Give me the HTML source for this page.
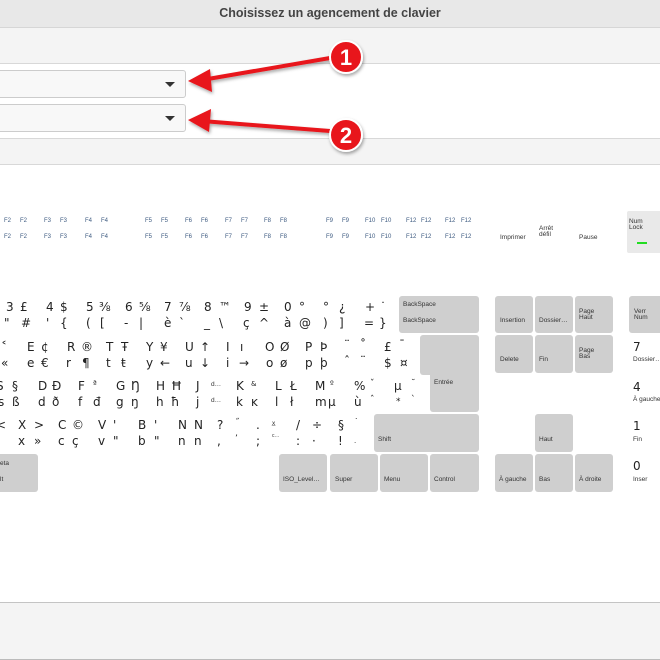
<!DOCTYPE html>
<html><head><meta charset="utf-8"><style>
*{margin:0;padding:0;box-sizing:border-box}
body{width:660px;height:660px;overflow:hidden;position:relative;background:#fff;font-family:"Liberation Sans","DejaVu Sans",sans-serif;color:#222}
.a{position:absolute}
.k{position:absolute;background:#cfcfcf;border-radius:3px}
.kl{position:absolute;font-size:6.5px;color:#333;line-height:7px;white-space:nowrap}
.c{position:absolute;font-size:12px;line-height:12px;color:#222;font-family:"DejaVu Sans","Liberation Sans",sans-serif;white-space:nowrap}
.f{position:absolute;font-size:6px;color:#3d5a80;line-height:6px;white-space:nowrap}
</style></head><body>
<div class="a" style="left:0;top:0;width:660px;height:28px;background:#e8e8e8;border-bottom:1px solid #d6d6d6"></div>
<div class="a" style="left:0;top:6px;width:660px;text-align:center;font-size:12.5px;color:#444;font-weight:bold">Choisissez un agencement de clavier</div>
<div class="a" style="left:0;top:28px;width:660px;height:36px;background:#f4f4f4;border-bottom:1px solid #d8d8d8"></div>
<div class="a" style="left:-5px;top:70px;width:191px;height:28px;background:#f8f8f8;border:1px solid #ccc;border-radius:3px"></div>
<div class="a" style="left:-5px;top:104px;width:191px;height:28px;background:#f8f8f8;border:1px solid #ccc;border-radius:3px"></div>
<div class="a" style="left:165px;top:82px;width:0;height:0;border-left:5px solid transparent;border-right:5px solid transparent;border-top:5px solid #333"></div>
<div class="a" style="left:165px;top:116px;width:0;height:0;border-left:5px solid transparent;border-right:5px solid transparent;border-top:5px solid #333"></div>
<div class="a" style="left:0;top:138px;width:660px;height:27px;background:#f4f4f4;border-top:1px solid #d8d8d8;border-bottom:1px solid #d8d8d8"></div>
<div class="a" style="left:0;top:602px;width:660px;height:58px;background:#f4f4f4;border-top:1px solid #c4c4c4;border-bottom:1px solid #bbb"></div>

<svg class="a" style="left:0;top:0" width="660" height="660">
<defs><filter id="s"><feDropShadow dx="1" dy="2" stdDeviation="1.5" flood-opacity="0.35"/></filter></defs>
<g filter="url(#s)" fill="#e8141a" stroke="#e8141a">
<line x1="330" y1="58" x2="202" y2="80" stroke-width="4"/>
<polygon points="188,81 210,69 212,92" stroke="none"/>
<line x1="330" y1="131" x2="202" y2="121" stroke-width="4"/>
<polygon points="188,120 211,109 209,132" stroke="none"/>
<circle cx="346" cy="57" r="16" stroke="#fff" stroke-width="2"/>
<circle cx="346" cy="135" r="16" stroke="#fff" stroke-width="2"/>
</g>
<text x="346" y="65" font-family="Liberation Sans" font-weight="bold" font-size="22" fill="#fff" text-anchor="middle">1</text>
<text x="346" y="143" font-family="Liberation Sans" font-weight="bold" font-size="22" fill="#fff" text-anchor="middle">2</text>
</svg>

<div class="f" style="left:4px;top:218px">F2</div><div class="f" style="left:20px;top:218px">F2</div>
<div class="f" style="left:44px;top:218px">F3</div><div class="f" style="left:60px;top:218px">F3</div>
<div class="f" style="left:85px;top:218px">F4</div><div class="f" style="left:101px;top:218px">F4</div>
<div class="f" style="left:145px;top:218px">F5</div><div class="f" style="left:161px;top:218px">F5</div>
<div class="f" style="left:185px;top:218px">F6</div><div class="f" style="left:201px;top:218px">F6</div>
<div class="f" style="left:225px;top:218px">F7</div><div class="f" style="left:241px;top:218px">F7</div>
<div class="f" style="left:264px;top:218px">F8</div><div class="f" style="left:280px;top:218px">F8</div>
<div class="f" style="left:326px;top:218px">F9</div><div class="f" style="left:342px;top:218px">F9</div>
<div class="f" style="left:365px;top:218px">F10</div><div class="f" style="left:381px;top:218px">F10</div>
<div class="f" style="left:406px;top:218px">F12</div><div class="f" style="left:421px;top:218px">F12</div>
<div class="f" style="left:445px;top:218px">F12</div><div class="f" style="left:461px;top:218px">F12</div>
<div class="f" style="left:4px;top:234px">F2</div><div class="f" style="left:20px;top:234px">F2</div>
<div class="f" style="left:44px;top:234px">F3</div><div class="f" style="left:60px;top:234px">F3</div>
<div class="f" style="left:85px;top:234px">F4</div><div class="f" style="left:101px;top:234px">F4</div>
<div class="f" style="left:145px;top:234px">F5</div><div class="f" style="left:161px;top:234px">F5</div>
<div class="f" style="left:185px;top:234px">F6</div><div class="f" style="left:201px;top:234px">F6</div>
<div class="f" style="left:225px;top:234px">F7</div><div class="f" style="left:241px;top:234px">F7</div>
<div class="f" style="left:264px;top:234px">F8</div><div class="f" style="left:280px;top:234px">F8</div>
<div class="f" style="left:326px;top:234px">F9</div><div class="f" style="left:342px;top:234px">F9</div>
<div class="f" style="left:365px;top:234px">F10</div><div class="f" style="left:381px;top:234px">F10</div>
<div class="f" style="left:406px;top:234px">F12</div><div class="f" style="left:421px;top:234px">F12</div>
<div class="f" style="left:445px;top:234px">F12</div><div class="f" style="left:461px;top:234px">F12</div>
<div class="kl" style="left:500px;top:234px">Imprimer</div>
<div class="kl" style="left:539px;top:226px;line-height:6px">Arrêt<br>défil</div>
<div class="kl" style="left:579px;top:234px">Pause</div>
<div class="a" style="left:627px;top:211px;width:40px;height:42px;background:#e9e9e9;border-radius:2px"></div>
<div class="kl" style="left:629px;top:219px;line-height:6px">Num<br>Lock</div>
<div class="a" style="left:637px;top:242px;width:10px;height:2px;background:#22dd22"></div>

<div class="k" style="left:399px;top:296px;width:80px;height:37px"></div>
<div class="kl" style="left:403px;top:301px">BackSpace</div><div class="kl" style="left:403px;top:317px">BackSpace</div>
<div class="k" style="left:495px;top:296px;width:38px;height:37px"></div><div class="kl" style="left:500px;top:317px">Insertion</div>
<div class="k" style="left:535px;top:296px;width:38px;height:37px"></div><div class="kl" style="left:539px;top:317px">Dossier…</div>
<div class="k" style="left:575px;top:296px;width:38px;height:37px"></div><div class="kl" style="left:579px;top:309px;line-height:6px">Page<br>Haut</div>
<div class="k" style="left:629px;top:296px;width:40px;height:37px"></div><div class="kl" style="left:634px;top:309px;line-height:6px">Verr<br>Num</div>
<div class="k" style="left:420px;top:335px;width:59px;height:40px;border-radius:3px 3px 0 3px"></div>
<div class="k" style="left:430px;top:370px;width:49px;height:42px;border-radius:0 0 3px 3px"></div>
<div class="kl" style="left:434px;top:379px">Entrée</div>
<div class="k" style="left:495px;top:335px;width:38px;height:38px"></div><div class="kl" style="left:500px;top:356px">Delete</div>
<div class="k" style="left:535px;top:335px;width:38px;height:38px"></div><div class="kl" style="left:539px;top:356px">Fin</div>
<div class="k" style="left:575px;top:335px;width:38px;height:38px"></div><div class="kl" style="left:579px;top:348px;line-height:6px">Page<br>Bas</div>
<div class="k" style="left:374px;top:414px;width:105px;height:38px"></div><div class="kl" style="left:378px;top:436px">Shift</div>
<div class="k" style="left:535px;top:414px;width:38px;height:38px"></div><div class="kl" style="left:539px;top:436px">Haut</div>
<div class="k" style="left:-5px;top:454px;width:43px;height:38px"></div><div class="kl" style="left:0px;top:460px">eta</div><div class="kl" style="left:0px;top:476px">lt</div>
<div class="k" style="left:279px;top:454px;width:48px;height:38px"></div><div class="kl" style="left:283px;top:476px">ISO_Level…</div>
<div class="k" style="left:330px;top:454px;width:48px;height:38px"></div><div class="kl" style="left:335px;top:476px">Super</div>
<div class="k" style="left:380px;top:454px;width:48px;height:38px"></div><div class="kl" style="left:384px;top:476px">Menu</div>
<div class="k" style="left:430px;top:454px;width:49px;height:38px"></div><div class="kl" style="left:434px;top:476px">Control</div>
<div class="k" style="left:495px;top:454px;width:38px;height:38px"></div><div class="kl" style="left:499px;top:476px">À gauche</div>
<div class="k" style="left:535px;top:454px;width:38px;height:38px"></div><div class="kl" style="left:539px;top:476px">Bas</div>
<div class="k" style="left:575px;top:454px;width:38px;height:38px"></div><div class="kl" style="left:579px;top:476px">À droite</div>
<div class="c" style="left:633px;top:341px">7</div><div class="kl" style="left:633px;top:356px">Dossier…</div>
<div class="c" style="left:633px;top:381px">4</div><div class="kl" style="left:633px;top:396px">À gauche</div>
<div class="c" style="left:633px;top:420px">1</div><div class="kl" style="left:633px;top:436px">Fin</div>
<div class="c" style="left:633px;top:460px">0</div><div class="kl" style="left:633px;top:476px">Inser</div>

<div class="c" style="left:6px;top:301px">3</div><div class="c" style="left:20px;top:301px">£</div>
<div class="c" style="left:46px;top:301px">4</div><div class="c" style="left:60px;top:301px">$</div>
<div class="c" style="left:86px;top:301px">5</div><div class="c" style="left:99px;top:301px">⅜</div>
<div class="c" style="left:125px;top:301px">6</div><div class="c" style="left:139px;top:301px">⅝</div>
<div class="c" style="left:164px;top:301px">7</div><div class="c" style="left:179px;top:301px">⅞</div>
<div class="c" style="left:204px;top:301px">8</div><div class="c" style="left:219px;top:301px">™</div>
<div class="c" style="left:244px;top:301px">9</div><div class="c" style="left:259px;top:301px">±</div>
<div class="c" style="left:284px;top:301px">0</div><div class="c" style="left:299px;top:301px">°</div>
<div class="c" style="left:323px;top:301px">°</div><div class="c" style="left:339px;top:301px">¿</div>
<div class="c" style="left:365px;top:301px">+</div><div class="c" style="left:380px;top:301px">˙</div>
<div class="c" style="left:4px;top:317px">"</div><div class="c" style="left:21px;top:317px">#</div>
<div class="c" style="left:46px;top:317px">'</div><div class="c" style="left:60px;top:317px">{</div>
<div class="c" style="left:86px;top:317px">(</div><div class="c" style="left:100px;top:317px">[</div>
<div class="c" style="left:124px;top:317px">-</div><div class="c" style="left:139px;top:317px">|</div>
<div class="c" style="left:164px;top:317px">è</div><div class="c" style="left:179px;top:317px">`</div>
<div class="c" style="left:204px;top:317px">_</div><div class="c" style="left:219px;top:317px">\</div>
<div class="c" style="left:243px;top:317px">ç</div><div class="c" style="left:259px;top:317px">^</div>
<div class="c" style="left:284px;top:317px">à</div><div class="c" style="left:299px;top:317px">@</div>
<div class="c" style="left:323px;top:317px">)</div><div class="c" style="left:339px;top:317px">]</div>
<div class="c" style="left:364px;top:317px">=</div><div class="c" style="left:379px;top:317px">}</div>
<div class="c" style="left:1px;top:341px">˂</div><div class="c" style="left:27px;top:341px">E</div><div class="c" style="left:41px;top:341px">¢</div>
<div class="c" style="left:67px;top:341px">R</div><div class="c" style="left:81px;top:341px">®</div>
<div class="c" style="left:106px;top:341px">T</div><div class="c" style="left:121px;top:341px">Ŧ</div>
<div class="c" style="left:146px;top:341px">Y</div><div class="c" style="left:160px;top:341px">¥</div>
<div class="c" style="left:185px;top:341px">U</div><div class="c" style="left:200px;top:341px">↑</div>
<div class="c" style="left:226px;top:341px">I</div><div class="c" style="left:240px;top:341px">ı</div>
<div class="c" style="left:265px;top:341px">O</div><div class="c" style="left:280px;top:341px">Ø</div>
<div class="c" style="left:305px;top:341px">P</div><div class="c" style="left:320px;top:341px">Þ</div>
<div class="c" style="left:344px;top:339px">¨</div><div class="c" style="left:360px;top:339px">˚</div>
<div class="c" style="left:384px;top:341px">£</div><div class="c" style="left:399px;top:339px">¯</div>
<div class="c" style="left:1px;top:357px">«</div><div class="c" style="left:27px;top:357px">e</div><div class="c" style="left:41px;top:357px">€</div>
<div class="c" style="left:66px;top:357px">r</div><div class="c" style="left:82px;top:357px">¶</div>
<div class="c" style="left:106px;top:357px">t</div><div class="c" style="left:121px;top:357px">ŧ</div>
<div class="c" style="left:146px;top:357px">y</div><div class="c" style="left:160px;top:357px">←</div>
<div class="c" style="left:185px;top:357px">u</div><div class="c" style="left:200px;top:357px">↓</div>
<div class="c" style="left:226px;top:357px">i</div><div class="c" style="left:239px;top:357px">→</div>
<div class="c" style="left:266px;top:357px">o</div><div class="c" style="left:280px;top:357px">ø</div>
<div class="c" style="left:305px;top:357px">p</div><div class="c" style="left:320px;top:357px">þ</div>
<div class="c" style="left:344px;top:355px">ˆ</div><div class="c" style="left:360px;top:355px">¨</div>
<div class="c" style="left:384px;top:357px">$</div><div class="c" style="left:400px;top:357px">¤</div>
<div class="c" style="left:-4px;top:380px">S</div><div class="c" style="left:12px;top:380px">§</div>
<div class="c" style="left:38px;top:380px">D</div><div class="c" style="left:52px;top:380px">Đ</div>
<div class="c" style="left:78px;top:380px">F</div><div class="c" style="left:93px;top:378px;font-size:8px">ª</div>
<div class="c" style="left:116px;top:380px">G</div><div class="c" style="left:131px;top:380px">Ŋ</div>
<div class="c" style="left:156px;top:380px">H</div><div class="c" style="left:171px;top:380px">Ħ</div>
<div class="c" style="left:196px;top:380px">J</div><div class="kl" style="left:211px;top:381px">d…</div>
<div class="c" style="left:236px;top:380px">K</div><div class="c" style="left:251px;top:378px;font-size:7px">&amp;</div>
<div class="c" style="left:275px;top:380px">L</div><div class="c" style="left:290px;top:380px">Ł</div>
<div class="c" style="left:315px;top:380px">M</div><div class="c" style="left:330px;top:378px;font-size:8px">º</div>
<div class="c" style="left:354px;top:380px">%</div><div class="c" style="left:370px;top:378px;font-size:9px">ˇ</div>
<div class="c" style="left:394px;top:380px">μ</div><div class="c" style="left:411px;top:378px;font-size:9px">˘</div>
<div class="c" style="left:-2px;top:396px">s</div><div class="c" style="left:12px;top:396px">ß</div>
<div class="c" style="left:38px;top:396px">d</div><div class="c" style="left:52px;top:396px">ð</div>
<div class="c" style="left:78px;top:396px">f</div><div class="c" style="left:93px;top:396px">đ</div>
<div class="c" style="left:116px;top:396px">g</div><div class="c" style="left:131px;top:396px">ŋ</div>
<div class="c" style="left:156px;top:396px">h</div><div class="c" style="left:171px;top:396px">ħ</div>
<div class="c" style="left:196px;top:396px">j</div><div class="kl" style="left:211px;top:397px">d…</div>
<div class="c" style="left:236px;top:396px">k</div><div class="c" style="left:251px;top:396px">ĸ</div>
<div class="c" style="left:275px;top:396px">l</div><div class="c" style="left:290px;top:396px">ł</div>
<div class="c" style="left:315px;top:396px">m</div><div class="c" style="left:328px;top:396px">µ</div>
<div class="c" style="left:354px;top:396px">ù</div><div class="c" style="left:370px;top:394px;font-size:9px">ˆ</div>
<div class="c" style="left:396px;top:396px;font-size:9px">*</div><div class="c" style="left:411px;top:394px;font-size:9px">`</div>
<div class="c" style="left:-4px;top:419px">&lt;</div><div class="c" style="left:18px;top:419px">X</div><div class="c" style="left:34px;top:419px">&gt;</div>
<div class="c" style="left:58px;top:419px">C</div><div class="c" style="left:72px;top:419px">©</div>
<div class="c" style="left:98px;top:419px">V</div><div class="c" style="left:113px;top:419px">'</div>
<div class="c" style="left:138px;top:419px">B</div><div class="c" style="left:154px;top:419px">'</div>
<div class="c" style="left:178px;top:419px">N</div><div class="c" style="left:194px;top:419px">N</div>
<div class="c" style="left:217px;top:419px">?</div><div class="c" style="left:235px;top:417px;font-size:9px">˝</div>
<div class="c" style="left:256px;top:419px">.</div><div class="kl" style="left:272px;top:420px">x̲</div>
<div class="c" style="left:296px;top:419px">/</div><div class="c" style="left:312px;top:419px">÷</div>
<div class="c" style="left:338px;top:419px">§</div><div class="c" style="left:354px;top:417px;font-size:9px">˙</div>
<div class="c" style="left:18px;top:435px">x</div><div class="c" style="left:34px;top:435px">»</div>
<div class="c" style="left:58px;top:435px">c</div><div class="c" style="left:72px;top:435px">ç</div>
<div class="c" style="left:98px;top:435px">v</div><div class="c" style="left:113px;top:435px">"</div>
<div class="c" style="left:138px;top:435px">b</div><div class="c" style="left:154px;top:435px">"</div>
<div class="c" style="left:178px;top:435px">n</div><div class="c" style="left:194px;top:435px">n</div>
<div class="c" style="left:217px;top:435px">,</div><div class="c" style="left:235px;top:433px;font-size:9px">ʼ</div>
<div class="c" style="left:256px;top:435px">;</div><div class="kl" style="left:272px;top:433px;font-size:5px">c…</div>
<div class="c" style="left:296px;top:435px">:</div><div class="c" style="left:312px;top:435px">·</div>
<div class="c" style="left:338px;top:435px">!</div><div class="c" style="left:354px;top:435px;font-size:7px">.</div>
</body></html>
